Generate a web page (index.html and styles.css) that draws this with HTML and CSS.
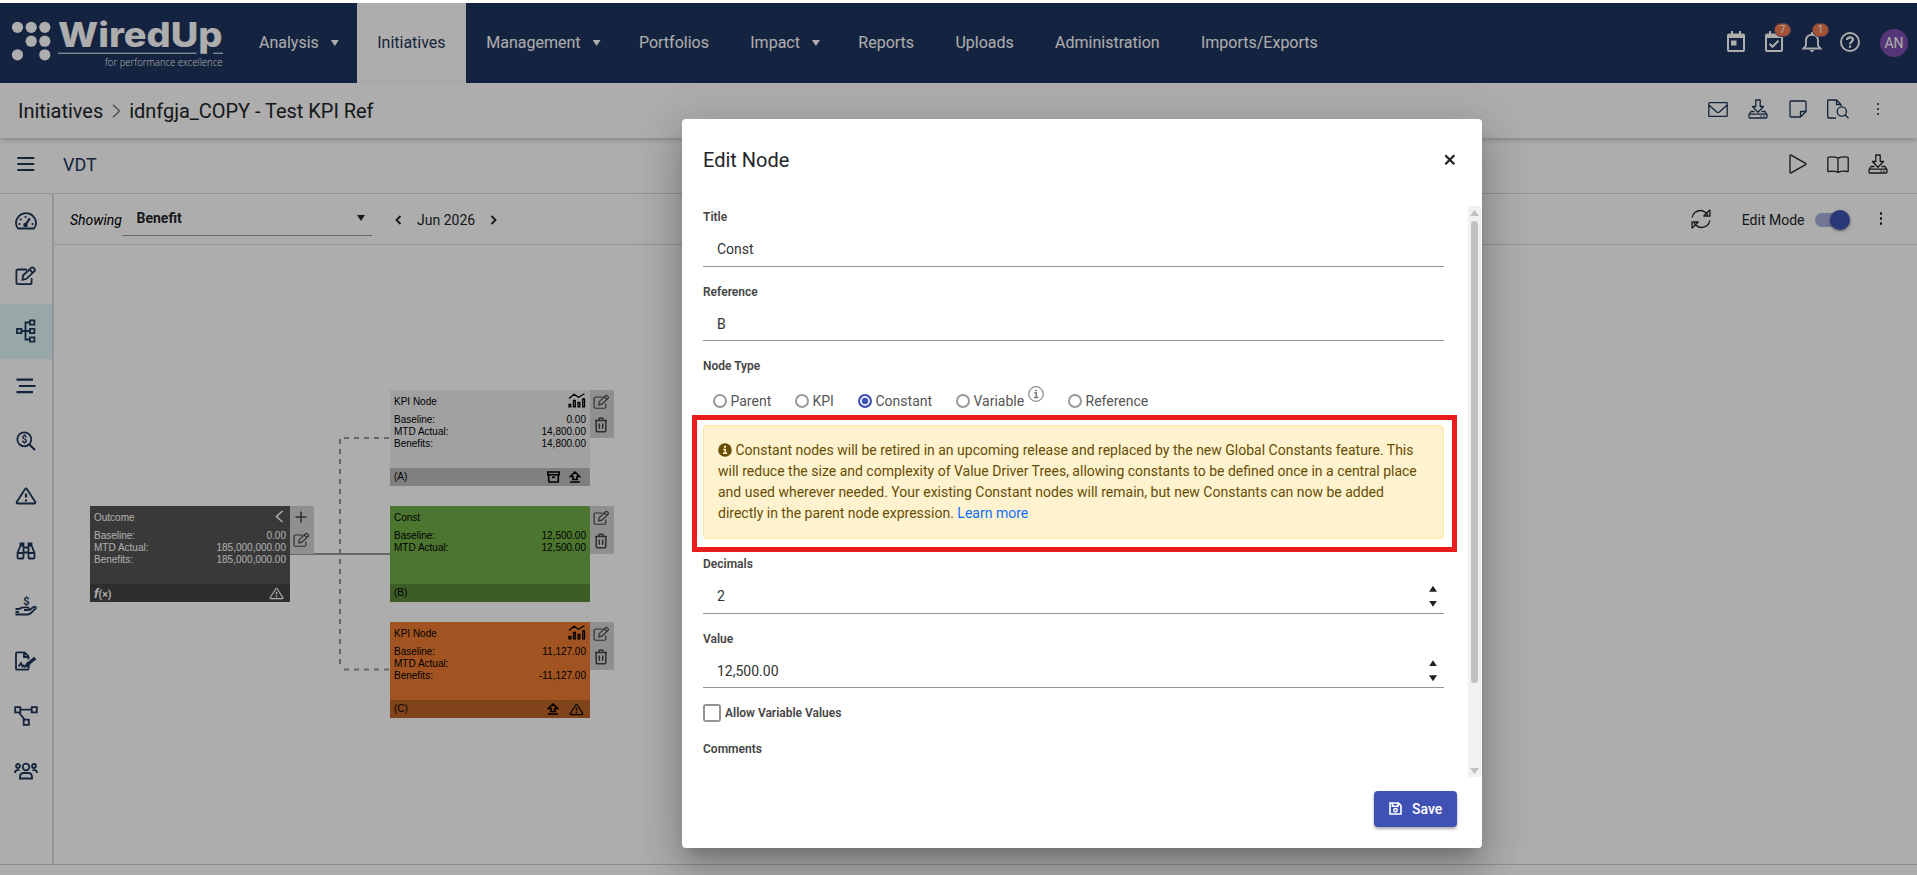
FILE: index.html
```html
<!DOCTYPE html>
<html lang="en">
<head>
<meta charset="utf-8">
<title>WiredUp - Initiatives</title>
<link rel="stylesheet" href="styles.css">
</head>
<body>
<svg class="defs" width="0" height="0">
  <defs>
    <symbol id="i-edit" viewBox="0 0 22 20"><path d="M12 3.500H3a1.600 1.600 0 0 0-1.600 1.600V16.500A1.600 1.600 0 0 0 3 18.100H15a1.600 1.600 0 0 0 1.600-1.600V12M8 9.500L16.200 1.900a1.500 1.500 0 0 1 2.200 0l1.100 1.100a1.500 1.500 0 0 1 0 2.200L11.500 12.800L7.500 13.800ZM14.500 3.500L17.800 6.800"/></symbol>
    <symbol id="i-trash" viewBox="0 0 14 16"><path d="M1 3.500H13M4.500 3.200L5.300 1.200H8.700L9.500 3.200M2.200 3.500V13.500a1.200 1.200 0 0 0 1.200 1.200H10.600a1.200 1.200 0 0 0 1.200-1.200V3.500M5.300 6.500V11.800M8.700 6.500V11.800"/></symbol>
    <symbol id="i-warn" viewBox="0 0 22 18"><path d="M11 1.500a1 1 0 0 1 .9.500L20.300 15a1 1 0 0 1-.9 1.500H2.600a1 1 0 0 1-.9-1.500L10.100 2a1 1 0 0 1 .9-.5Z"/><path class="thick" d="M11 6.500V10.600M11 12.400V14.400"/></symbol>
    <symbol id="i-download" viewBox="0 0 20 20"><path d="M7.800 1H12.200V7.500H15.500L10 13.300L4.500 7.500H7.800ZM6.500 12.500H3L1 15.500V18a1 1 0 0 0 1 1H18a1 1 0 0 0 1-1V15.500L17 12.500H13.500M1 15.200H19M12.500 17.200H13.700M15.500 17.200H16.700"/></symbol>
    <symbol id="i-chart" viewBox="0 0 18 15"><path d="M1 5.500L6 1.200L10.500 4.200L16.500 .8M1 11.500H2.800V13.800H1ZM5.500 7.500H7.300V13.800H5.500ZM10 9.500H11.800V13.800H10ZM14.700 6H16.500V13.800H14.700Z"/></symbol>
    <symbol id="i-up" viewBox="0 0 12 12"><path d="M6 1L10.700 5.500H8V8.500H4V5.500H1.300ZM1 11H11"/></symbol>
    <symbol id="i-archive" viewBox="0 0 13 12"><path d="M.8 1H12.200V3.700H.8ZM1.700 3.700V10.200a.8.800 0 0 0 .8.800H10.500a.8.800 0 0 0 .8-.8V3.700M5 6.200H8"/></symbol>
  </defs>
</svg>

<div class="app">
  <header class="nav">
    <svg class="logo" width="232" height="80" viewBox="0 3 232 80">
      <g fill="#fff">
        <circle cx="17.500" cy="27.300" r="5.600"/><circle cx="31.200" cy="27.300" r="5.600"/><circle cx="44.800" cy="27.300" r="5.600"/>
        <circle cx="31.200" cy="41.200" r="5.600"/><circle cx="44.800" cy="41.200" r="5.600"/>
        <circle cx="17.500" cy="54.800" r="5.600"/><circle cx="44.800" cy="54.800" r="5.600"/>
        <rect x="58" y="52.700" width="138.500" height="1"/><rect x="213" y="52.700" width="10" height="1"/>
      </g>
      <text class="logo-name" x="58" y="47.300" textLength="164.500" lengthAdjust="spacingAndGlyphs">WiredUp</text>
      <text class="logo-tag" x="105" y="66" textLength="117.500" lengthAdjust="spacingAndGlyphs">for performance excellence</text>
    </svg>
    <nav class="menu">
      <a class="menu-item">Analysis<i class="caret"></i></a>
      <a class="menu-item active">Initiatives</a>
      <a class="menu-item">Management<i class="caret"></i></a>
      <a class="menu-item">Portfolios</a>
      <a class="menu-item">Impact<i class="caret"></i></a>
      <a class="menu-item">Reports</a>
      <a class="menu-item">Uploads</a>
      <a class="menu-item">Administration</a>
      <a class="menu-item">Imports/Exports</a>
    </nav>
    <div class="nav-tools">
      <span class="cell"><svg width="20" height="22" viewBox="0 0 20 22"><path fill="#fff" fill-rule="evenodd" d="M5 0H7V2.500H13V0H15V2.500H17a2 2 0 0 1 2 2V19a2 2 0 0 1-2 2H3a2 2 0 0 1-2-2V4.500a2 2 0 0 1 2-2H5ZM3 7V19H17V7ZM5 9.500H10.500V14.500H5Z"/></svg></span>
      <span class="cell"><svg width="20" height="22" viewBox="0 0 20 22"><path fill="#fff" fill-rule="evenodd" d="M5 0H7V2.500H13V0H15V2.500H17a2 2 0 0 1 2 2V19a2 2 0 0 1-2 2H3a2 2 0 0 1-2-2V4.500a2 2 0 0 1 2-2H5ZM3 7V19H17V7Z"/><path fill="none" stroke="#fff" stroke-width="2" d="M5.500 12.800L8.500 15.800L14.500 9.800"/></svg><b class="badge">7</b></span>
      <span class="cell"><svg width="20" height="22" viewBox="0 0 20 22"><path fill="none" stroke="#fff" stroke-width="1.900" d="M1.500 17.500H18.500L16 14.500V9.500C16 6 13.500 3.700 10 3.700S4 6 4 9.500V14.500L1.500 17.500Z"/><path fill="#fff" d="M9 1H11V4H9ZM7.500 19H12.500L10 21.500Z"/></svg><b class="badge">1</b></span>
      <span class="cell help"><svg width="20" height="20" viewBox="0 0 20 20"><circle cx="10" cy="10" r="9" fill="none" stroke="#fff" stroke-width="1.900"/><path fill="none" stroke="#fff" stroke-width="2.200" d="M7 8C7 6.200 8.200 5.300 10 5.300S13 6.300 13 7.800C13 9.600 10 9.800 10 12.200M10 13.500V15.700"/></svg></span>
      <span class="avatar">AN</span>
    </div>
  </header>

  <div class="crumbs">
    <span>Initiatives</span>
    <svg class="crumb-sep" width="9" height="14" viewBox="0 0 9 14"><path fill="none" stroke="#6c757d" stroke-width="1.400" d="M1 .8L7.500 7L1 13.200"/></svg>
    <span>idnfgja_COPY - Test KPI Ref</span>
    <div class="tools navy">
      <span class="tool"><svg class="line" width="20" height="15" viewBox="0 0 20 15"><path d="M.8 1.300a.6.600 0 0 1 .6-.6H18.600a.6.600 0 0 1 .6.600V13.700a.6.600 0 0 1-.6.600H1.400a.6.600 0 0 1-.6-.6ZM.8 3L9 10.300Q10 11 11 10.300L19.200 3"/></svg></span>
      <span class="tool"><svg class="line" width="20" height="20"><use href="#i-download"/></svg></span>
      <span class="tool"><svg class="line" width="18" height="18" viewBox="0 0 18 18"><path d="M2 1H16a1 1 0 0 1 1 1V11.500L11.500 17H2a1 1 0 0 1-1-1V2a1 1 0 0 1 1-1ZM17 11.500H11.500V17"/></svg></span>
      <span class="tool"><svg class="line" width="22" height="20" viewBox="0 0 22 20"><path d="M9 19H1.700a1 1 0 0 1-1-1V2a1 1 0 0 1 1-1H9.500L14 5.500V7M9.500 1V5.500H14"/><circle cx="14.800" cy="12.500" r="4.600"/><path d="M18 15.800L21.500 19.300"/></svg></span>
      <span class="tool kebab"><i></i><i></i><i></i></span>
    </div>
  </div>

  <div class="viewbar">
    <svg class="burger" width="18" height="14" viewBox="0 0 18 14"><path stroke="#1d3557" stroke-width="2" d="M.3 1H17.300M.3 7H17.300M.3 13H17.300"/></svg>
    <span class="view-name">VDT</span>
    <div class="tools dark">
      <span class="tool"><svg class="line" width="18" height="20" viewBox="0 0 18 20"><path d="M1 1.700a.7.700 0 0 1 1.100-.6L16.600 9.400a.7.700 0 0 1 0 1.200L2.100 18.900A.7.700 0 0 1 1 18.300Z"/></svg></span>
      <span class="tool"><svg class="line" width="22" height="17" viewBox="0 0 22 17"><path d="M11 2.200C8 .8 4.500.6 1.500 1.200a.8.800 0 0 0-.7.800V14.800a.7.700 0 0 0 .9.700C5 14.900 8 15 11 16.400C14 15 17 14.900 20.300 15.500a.7.700 0 0 0 .9-.7V2a.8.800 0 0 0-.7-.8C17.500.6 14 .8 11 2.200ZM11 2.200V16.400"/></svg></span>
      <span class="tool"><svg class="line" width="20" height="20"><use href="#i-download"/></svg></span>
    </div>
  </div>

  <div class="main">
    <aside class="side">
      <span class="side-item"><svg width="22" height="18" viewBox="0 0 22 18"><path d="M3 16.500C1.700 15 1 13.300 1 11.200C1 5.500 5.500 1.200 11 1.200S21 5.500 21 11.200C21 13.300 20.300 15 19 16.500Z"/><path class="thick" d="M10.500 12.800L14.800 6.300"/><path class="dots" d="M4.400 12H4.500M5.700 7.500H5.800M10.500 5H10.600M17.500 12H17.600"/><circle cx="10.500" cy="13" r="1.400" fill="currentColor"/></svg></span>
      <span class="side-item"><svg width="22" height="20"><use href="#i-edit"/></svg></span>
      <span class="side-item active"><svg width="20" height="24" viewBox="0 0 20 24"><path d="M1 9.800H5.400V14.200H1ZM14 1.300H18.400V5.700H14ZM14 9.800H18.400V14.200H14ZM14 18.300H18.400V22.700H14ZM5.400 12H14M13.500 3.500H9.500V20.500H13.500"/></svg></span>
      <span class="side-item"><svg width="20" height="16" viewBox="0 0 20 16"><path class="thick" d="M.5 1.700H17M3 8H19.500M.5 14.200H17"/></svg></span>
      <span class="side-item"><svg width="20" height="20" viewBox="0 0 20 20"><circle cx="8.300" cy="8.300" r="7"/><path class="thick" d="M13.300 13.500L19 19"/><text x="8.300" y="12" text-anchor="middle" class="dollar">$</text></svg></span>
      <span class="side-item"><svg width="22" height="20"><use href="#i-warn"/></svg></span>
      <span class="side-item"><svg width="20" height="18" viewBox="0 0 20 18"><path d="M4.500 3.500L1.500 11V15.500a1 1 0 0 0 1 1H6.500a1 1 0 0 0 1-1V3.500M15.500 3.500L18.500 11V15.500a1 1 0 0 1-1 1H13.500a1 1 0 0 1-1-1V3.500M4.500 1.500H7.500V3.500H4.500ZM12.500 1.500H15.500V3.500H12.500ZM7.500 5.500H12.500M7.500 10.500H12.500M1.500 11H7M13 11H18.500"/></svg></span>
      <span class="side-item"><svg width="22" height="22" viewBox="0 -2 22 22"><path d="M.5 12H4C5.500 10.800 6.500 10.300 8.500 10.300H12.500C14 10.300 14.500 13 12.500 13H9M14 13.500L18.500 10C20 9 21.500 10.500 20.500 11.700L16 16C15 17 14 17.500 12.500 17.500H.5M.5 15H4"/><text x="11.300" y="7.800" text-anchor="middle" class="dollar big">$</text></svg></span>
      <span class="side-item"><svg width="22" height="20" viewBox="0 0 22 20"><path d="M13.500 14.500V17.500a1.200 1.200 0 0 1-1.200 1.200H2.200A1.200 1.200 0 0 1 1 17.500V2.500A1.200 1.200 0 0 1 2.200 1.300H9.500L13.500 5.300V8.500M9 1.500V6H13.500M3.500 15.500L6 12L7.500 15.500L9.500 14"/><path class="pen" d="M11.500 14.500L19.500 7.500"/><path d="M10.500 15.500L12.500 12L14 14ZM18.500 6.500L20.800 9"/></svg></span>
      <span class="side-item"><svg width="24" height="20" viewBox="0 0 24 20"><path d="M1.200 1.200H6.300V6.300H1.200ZM17.700 1.200H22.800V6.300H17.700ZM9.700 13.700H14.800V18.800H9.700ZM6.300 3.700H17.700M5 6.500L10.500 13.500"/></svg></span>
      <span class="side-item"><svg width="24" height="18" viewBox="0 0 24 18"><circle cx="12" cy="5" r="3.300"/><circle cx="4" cy="4" r="2"/><circle cx="20" cy="4" r="2"/><path d="M6 16.500V15C6 12.500 7.500 11 9.800 11H14.200C16.500 11 18 12.500 18 15V16.500ZM1 11C1 9 2 8.200 3.500 8.200H5.500M23 11C23 9 22 8.200 20.500 8.200H18.500"/></svg></span>
    </aside>

    <section class="content">
      <div class="filters">
        <em class="showing">Showing</em>
        <div class="select"><b>Benefit</b><i class="caret"></i></div>
        <svg class="chev prev" width="7" height="10" viewBox="0 0 7 10"><path d="M5.500 1L1.500 5L5.500 9"/></svg>
        <span class="month">Jun 2026</span>
        <svg class="chev next" width="7" height="10" viewBox="0 0 7 10"><path d="M1.500 1L5.500 5L1.500 9"/></svg>
        <div class="filters-right">
          <svg class="line refresh" width="20" height="20" viewBox="0 0 20 20"><path d="M1.200 8.500C1.700 4.300 5.300 1.500 9.500 1.500C12.500 1.500 14.500 3 17 5.800M19 .8V7H12.800L19 .8M18.800 11.500C18.300 15.700 14.700 18.500 10.500 18.500C7.500 18.500 5.500 17 3 14.200M1 19.200V13H7.200L1 19.200"/></svg>
          <span>Edit Mode</span>
          <span class="toggle"><i></i></span>
          <span class="kebab"><i></i><i></i><i></i></span>
        </div>
      </div>

      <div class="canvas">
        <svg class="links" width="300" height="260" viewBox="290 430 300 260">
          <path class="solid" d="M290 554H390"/>
          <path class="dash" d="M340 439V669"/>
          <path class="dash" d="M344 438H390M344 669.500H390"/>
        </svg>

        <article class="node outcome">
          <div class="node-body">
            <div class="node-title">Outcome<svg class="ni" width="9" height="13" viewBox="0 0 9 13"><path d="M7.500 1L1.500 6.500L7.500 12"/></svg></div>
            <p><span>Baseline:</span><span>0.00</span></p>
            <p><span>MTD Actual:</span><span>185,000,000.00</span></p>
            <p><span>Benefits:</span><span>185,000,000.00</span></p>
          </div>
          <div class="node-foot"><b class="fx"><i>f</i>(×)</b><svg class="ni" width="15" height="13"><use href="#i-warn"/></svg></div>
          <div class="node-side"><svg width="12" height="12" viewBox="0 0 12 12"><path d="M6 .5V11.500M.5 6H11.500"/></svg><svg width="17" height="16"><use href="#i-edit"/></svg></div>
        </article>

        <article class="node kpi-a">
          <div class="node-body">
            <div class="node-title">KPI Node<svg class="ni chart" width="18" height="15"><use href="#i-chart"/></svg></div>
            <p><span>Baseline:</span><span>0.00</span></p>
            <p><span>MTD Actual:</span><span>14,800.00</span></p>
            <p><span>Benefits:</span><span>14,800.00</span></p>
          </div>
          <div class="node-foot"><span>(A)</span><svg class="ni" width="13" height="12"><use href="#i-archive"/></svg><svg class="ni" width="12" height="12"><use href="#i-up"/></svg></div>
          <div class="node-side"><svg width="17" height="16"><use href="#i-edit"/></svg><svg width="14" height="16"><use href="#i-trash"/></svg></div>
        </article>

        <article class="node const-b">
          <div class="node-body">
            <div class="node-title">Const</div>
            <p><span>Baseline:</span><span>12,500.00</span></p>
            <p><span>MTD Actual:</span><span>12,500.00</span></p>
          </div>
          <div class="node-foot"><span>(B)</span></div>
          <div class="node-side"><svg width="17" height="16"><use href="#i-edit"/></svg><svg width="14" height="16"><use href="#i-trash"/></svg></div>
        </article>

        <article class="node kpi-c">
          <div class="node-body">
            <div class="node-title">KPI Node<svg class="ni chart" width="18" height="15"><use href="#i-chart"/></svg></div>
            <p><span>Baseline:</span><span>11,127.00</span></p>
            <p><span>MTD Actual:</span><span></span></p>
            <p><span>Benefits:</span><span>-11,127.00</span></p>
          </div>
          <div class="node-foot"><span>(C)</span><svg class="ni" width="12" height="12"><use href="#i-up"/></svg><svg class="ni" width="15" height="13"><use href="#i-warn"/></svg></div>
          <div class="node-side"><svg width="17" height="16"><use href="#i-edit"/></svg><svg width="14" height="16"><use href="#i-trash"/></svg></div>
        </article>
      </div>
    </section>
  </div>
  <footer class="bottom"></footer>
</div>

<div class="backdrop">
  <div class="modal">
    <div class="modal-head"><h2>Edit Node</h2><svg width="12" height="12" viewBox="0 0 12 12"><path stroke="#212529" stroke-width="2.300" d="M1.300 1.300L10.300 10.300M10.300 1.300L1.300 10.300"/></svg></div>
    <div class="modal-body">
      <form class="form">
        <div class="field"><label>Title</label><div class="input">Const</div></div>
        <div class="field"><label>Reference</label><div class="input">B</div></div>
        <div class="types">
          <label>Node Type</label>
          <div class="radios">
            <span class="radio parent"><i></i>Parent</span>
            <span class="radio kpi"><i></i>KPI</span>
            <span class="radio constant on"><i></i>Constant</span>
            <span class="radio variable"><i></i>Variable<svg class="hint" width="16" height="16" viewBox="0 0 16 16"><circle cx="8" cy="8" r="7.300" fill="none" stroke="#8a8a8a" stroke-width="1.200"/><path fill="none" stroke="#777" stroke-width="1.500" d="M6.200 7H8.300V11.500M6 11.500H10.300M7.200 4.500H8.900"/></svg></span>
            <span class="radio reference"><i></i>Reference</span>
          </div>
        </div>
        <div class="alert"><svg class="info" width="14" height="14" viewBox="0 0 14 14"><circle cx="7" cy="7" r="6.800" fill="#664d03"/><path stroke="#fff3cd" stroke-width="1.900" fill="none" d="M6 3.700H8"/><path stroke="#fff3cd" stroke-width="1.500" fill="none" d="M5.200 6.500H7.300V10.200M5 10.200H9.200"/></svg> Constant nodes will be retired in an upcoming release and replaced by the new Global Constants feature. This will reduce the size and complexity of Value Driver Trees, allowing constants to be defined once in a central place and used wherever needed. Your existing Constant nodes will remain, but new Constants can now be added directly in the parent node expression. <a>Learn more</a></div>
        <div class="field"><label>Decimals</label><div class="input">2<span class="spin"><i class="up"></i><i class="caret"></i></span></div></div>
        <div class="field"><label>Value</label><div class="input">12,500.00<span class="spin"><i class="up"></i><i class="caret"></i></span></div></div>
        <div class="check"><i></i><label>Allow Variable Values</label></div>
        <label class="comments">Comments</label>
      </form>
      <div class="scroll"><i class="s-up"></i><i class="thumb"></i><i class="s-down"></i></div>
    </div>
    <div class="modal-foot">
      <button class="save" type="button"><svg width="13" height="13" viewBox="0 0 13 13"><path fill="none" stroke="#fff" stroke-width="1.600" d="M1 1H9.500L12 3.500V12H1ZM3.500 1V4.200H9V1"/><circle cx="6.500" cy="8.300" r="1.700" fill="none" stroke="#fff" stroke-width="1.500"/></svg>Save</button>
    </div>
    <div class="highlight"></div>
  </div>
</div>
</body>
</html>
```

FILE: styles.css
```css
* { box-sizing: border-box; }

body {
  margin: 0;
  width: 1917px;
  height: 875px;
  overflow: hidden;
  background: #fff;
  color: #212529;
  font-family: Roboto, "Liberation Sans", sans-serif;
  font-size: 14px;
}

svg { display: block; flex: none; overflow: visible; }
.defs { position: absolute; }
i { font-style: normal; }

.app {
  display: flex;
  flex-direction: column;
  height: 875px;
  border-top: 3px solid #fff;
  background: #fff;
}

.caret {
  width: 8px;
  height: 6px;
  background: currentColor;
  clip-path: polygon(0 0, 100% 0, 50% 100%);
}

/* Navigation */
.nav { display: flex; flex: none; height: 80px; background: #1e345e; color: #fff; }
.logo-name { fill: #fff; font: 800 34px Inter, sans-serif; }
.logo-tag { fill: #fff; font: 300 10px "Open Sans", sans-serif; }
.menu { display: flex; margin-left: 6.500px; font-size: 16px; }
.menu-item { display: flex; align-items: center; padding: 0 20.850px 1px 20.500px; }
.menu-item .caret { margin: 1px -3px 0 12px; }
.menu-item.active { padding-right: 20.200px; background: #fff; color: #1d3557; }
.nav-tools { display: flex; align-items: center; margin-left: auto; padding-right: 9px; }
.cell { position: relative; display: flex; justify-content: center; width: 38px; padding-bottom: 3px; }
.badge {
  position: absolute;
  left: 19px;
  top: -8px;
  width: 17px;
  height: 14px;
  border: 1px solid #7f5570;
  border-radius: 7px;
  background: #f47b50;
  font-size: 10px;
  font-weight: 400;
  line-height: 12px;
  text-align: center;
}
.avatar {
  width: 28px;
  height: 28px;
  margin-left: 11px;
  border-radius: 50%;
  background: #7e4fb0;
  font-size: 14px;
  line-height: 28px;
  text-align: center;
}

/* Breadcrumb and view bars */
.crumbs {
  position: relative;
  display: flex;
  flex: none;
  align-items: center;
  height: 55px;
  padding: 0 19px 0 18px;
  box-shadow: 0 2px 5px rgba(0, 0, 0, .22);
  font-size: 20px;
}
.crumbs > span { padding-top: 1px; letter-spacing: -.03px; }
.crumb-sep { margin: 0 8px 0 9px; }
.tools { display: flex; margin-left: auto; height: 100%; align-items: center; }
.crumbs .tools { padding-bottom: 3px; }
.tool { display: flex; width: 40px; justify-content: center; align-items: center; }
.navy { color: #1d3557; }
.line { fill: none; stroke: currentColor; stroke-width: 1.300; stroke-linejoin: round; }
.kebab { display: flex; flex-direction: column; align-items: center; gap: 2.500px; }
.kebab i { width: 2.500px; height: 2.500px; border-radius: 50%; background: #212529; }
.viewbar {
  display: flex;
  flex: none;
  align-items: center;
  height: 56px;
  padding: 0 19px 3px 17px;
  border-bottom: 1px solid #dadada;
}
.view-name { margin-left: 28px; padding-top: 1px; font-size: 18px; color: #1d3557; }

/* Sidebar */
.main { display: flex; flex: none; height: 670px; }
.side { flex: none; width: 54px; border-right: 2px solid #dedede; color: #1d3557; }
.side-item { display: flex; align-items: center; justify-content: center; height: 55px; padding-bottom: 2px; }
.side-item.active { background: #e0f8f8; }
.side svg { fill: none; stroke: currentColor; stroke-width: 1.800; }
.thick { stroke-width: 2.200; }
.pen { stroke-width: 3; }
.dots { stroke-width: 2.200; stroke-linecap: round; }
.dollar { fill: currentColor; stroke: none; font: bold 10px Roboto, sans-serif; }
.dollar.big { font-size: 11px; }

/* Filter bar */
.content { flex: 1; display: flex; flex-direction: column; }
.filters { display: flex; flex: none; align-items: center; height: 51px; padding: 1px 35px 0 16px; border-bottom: 1px solid #dadada; color: #212529; }
.showing { width: 52px; color: #000; }
.select {
  display: flex;
  align-items: center;
  justify-content: space-between;
  width: 250px;
  height: 33px;
  padding: 0 7px 2px 14.500px;
  border-bottom: 1px solid #999;
}
.chev { fill: none; stroke: #212529; stroke-width: 1.800; }
.prev { margin: 0 15px 0 23px; }
.next { margin-left: 15px; }
.filters-right { display: flex; align-items: center; margin-left: auto; }
.refresh { margin: -2px 31px 0 0; }
.filters-right .kebab { margin-top: -2px; }
.toggle { width: 33px; height: 14px; margin: 1px 32px 0 10px; border-radius: 7px; background: #aab0dd; }
.toggle i { display: block; width: 20px; height: 20px; margin: -3px 0 0 15px; border-radius: 50%; background: #3f51b5; box-shadow: 0 1px 3px rgba(0, 0, 0, .5); }

/* Value driver tree canvas */
.canvas { position: relative; flex: 1; font: 10px/12px "Liberation Sans", Arial, sans-serif; color: #000; }
.links { position: absolute; left: 236px; top: 185px; fill: none; }
.solid { stroke: #999; stroke-width: 2; }
.dash { stroke: #999; stroke-width: 2; stroke-dasharray: 5 5; }
.node { position: absolute; width: 200px; height: 96px; display: flex; flex-direction: column; }
.outcome { left: 36px; top: 261px; background: #555; color: #fff; }
.kpi-a { left: 336px; top: 145px; background: #ededed; }
.const-b { left: 336px; top: 261px; background: #70ad47; }
.kpi-c { left: 336px; top: 377px; background: #ed7d31; }
.node-body { flex: 1; padding: 2px 4px; }
.node-title { display: flex; align-items: center; justify-content: space-between; height: 20px; margin-bottom: 2px; }
.node-title .ni { margin: -4px 2px 0 0; }
.node-title .chart { margin-right: 0; }
.node p { display: flex; justify-content: space-between; margin: 0; }
.node-foot { display: flex; align-items: center; height: 18px; padding: 0 6px 0 4px; background: rgba(0, 0, 0, .2); }
.node-foot > :first-child { margin-right: auto; }
.node-foot .ni + .ni { margin-left: 9px; }
.kpi-c .node-foot .ni + .ni { margin-left: 10px; }
.kpi-a .node-foot { padding-right: 9px; }
.ni { fill: none; stroke: currentColor; stroke-width: 1.600; }
.chart { stroke-width: 1.300; }
.node-foot .ni .thick { stroke-width: 2; }
.fx { font: bold 10.500px Roboto, sans-serif; }
.fx i { font-size: 13px; font-style: italic; }
.node-side {
  position: absolute;
  left: 200px;
  top: 0;
  display: flex;
  flex-direction: column;
  align-items: center;
  justify-content: space-around;
  width: 24px;
  height: 48px;
  padding: 0 2px 1px 0;
  background: #d3d3d3;
  color: #444;
}
.node-side svg { fill: none; stroke: currentColor; stroke-width: 1.500; }
.bottom { flex: 1; border-top: 1px solid #cfcfcf; }

/* Dialog */
.backdrop { position: absolute; left: 0; top: 3px; width: 1917px; height: 872px; padding: 116px 0 0 682px; background: rgba(0, 0, 0, .32); overflow: hidden; }
.modal {
  position: relative;
  display: flex;
  flex-direction: column;
  width: 800px;
  height: 729px;
  border-radius: 4px;
  background: #fff;
  box-shadow: 0 11px 15px -7px rgba(0, 0, 0, .2), 0 24px 38px 3px rgba(0, 0, 0, .14), 0 9px 46px 8px rgba(0, 0, 0, .12);
}
.modal-head { display: flex; align-items: center; justify-content: space-between; height: 87px; padding: 0 26px 6px 21px; }
.modal-head h2 { margin: 0; font-size: 20px; font-weight: 400; }
.modal-body { display: flex; justify-content: space-between; height: 571px; padding-right: 1px; overflow: hidden; }
.form { width: 741px; margin-left: 21px; padding-top: 2px; }
label { display: block; color: #444; font-size: 12px; font-weight: 600; line-height: 18px; }
.field { height: 58.500px; margin-bottom: 16px; }
.input { position: relative; display: flex; align-items: center; height: 40.500px; padding: 7px 0 0 14px; border-bottom: 1px solid #949494; color: #333; }
.spin { display: flex; flex-direction: column; gap: 9px; margin: 0 7px 0 auto; color: #212121; }
.up { width: 8px; height: 6px; background: currentColor; clip-path: polygon(0 100%, 100% 100%, 50% 0); }
.radios { display: flex; align-items: center; height: 50px; padding: 1px 0 0 10px; color: #555; }
.radio { display: flex; align-items: center; }
.radio i { width: 14px; height: 14px; margin-right: 3.500px; border: 2px solid #999; border-radius: 50%; }
.radio.on i { border-color: #3f51b5; background: #3f51b5; box-shadow: inset 0 0 0 1.800px #fff; }
.parent { width: 82px; }
.kpi { width: 63px; }
.constant { width: 98px; }
.variable { width: 112px; }
.hint { margin: -14px 0 0 3.500px; }
.alert {
  height: 114px;
  margin-bottom: 16px;
  padding: 14px 13px 14px 14px;
  border: 1px solid #ffe69c;
  border-radius: 4px;
  background: #fff2ce;
  color: #664d03;
  line-height: 21px;
}
.alert a { color: #0d6efd; }
.info { display: inline-block; vertical-align: -2px; }
.check { display: flex; gap: 4px; align-items: center; height: 18px; margin-bottom: 18px; }
.check i { width: 18px; height: 18px; border: 2px solid #949494; border-radius: 3px; }
.scroll { display: flex; flex-direction: column; align-items: center; width: 13px; background: #f1f1f1; }
.s-up, .s-down { width: 9px; height: 6px; background: #c1c1c1; clip-path: polygon(0 100%, 100% 100%, 50% 0); }
.s-up { margin: 4px 0 5px; }
.s-down { margin: auto 0 3px; transform: rotate(180deg); }
.thumb { width: 7px; height: 462px; border-radius: 4px; background: #c1c1c1; }
.modal-foot { display: flex; justify-content: flex-end; padding: 14px 25px 0 0; }
.save {
  display: flex;
  align-items: center;
  gap: 10px;
  width: 83px;
  height: 36px;
  padding: 0 0 1px 15px;
  border: 0;
  border-radius: 4px;
  background: #3f51b5;
  box-shadow: 0 2px 3px rgba(0, 0, 0, .35);
  color: #fff;
  font: 500 14px Roboto, sans-serif;
}
.highlight { position: absolute; left: 10px; top: 296px; width: 765px; height: 137px; border: 5px solid #e81c1c; }
```
